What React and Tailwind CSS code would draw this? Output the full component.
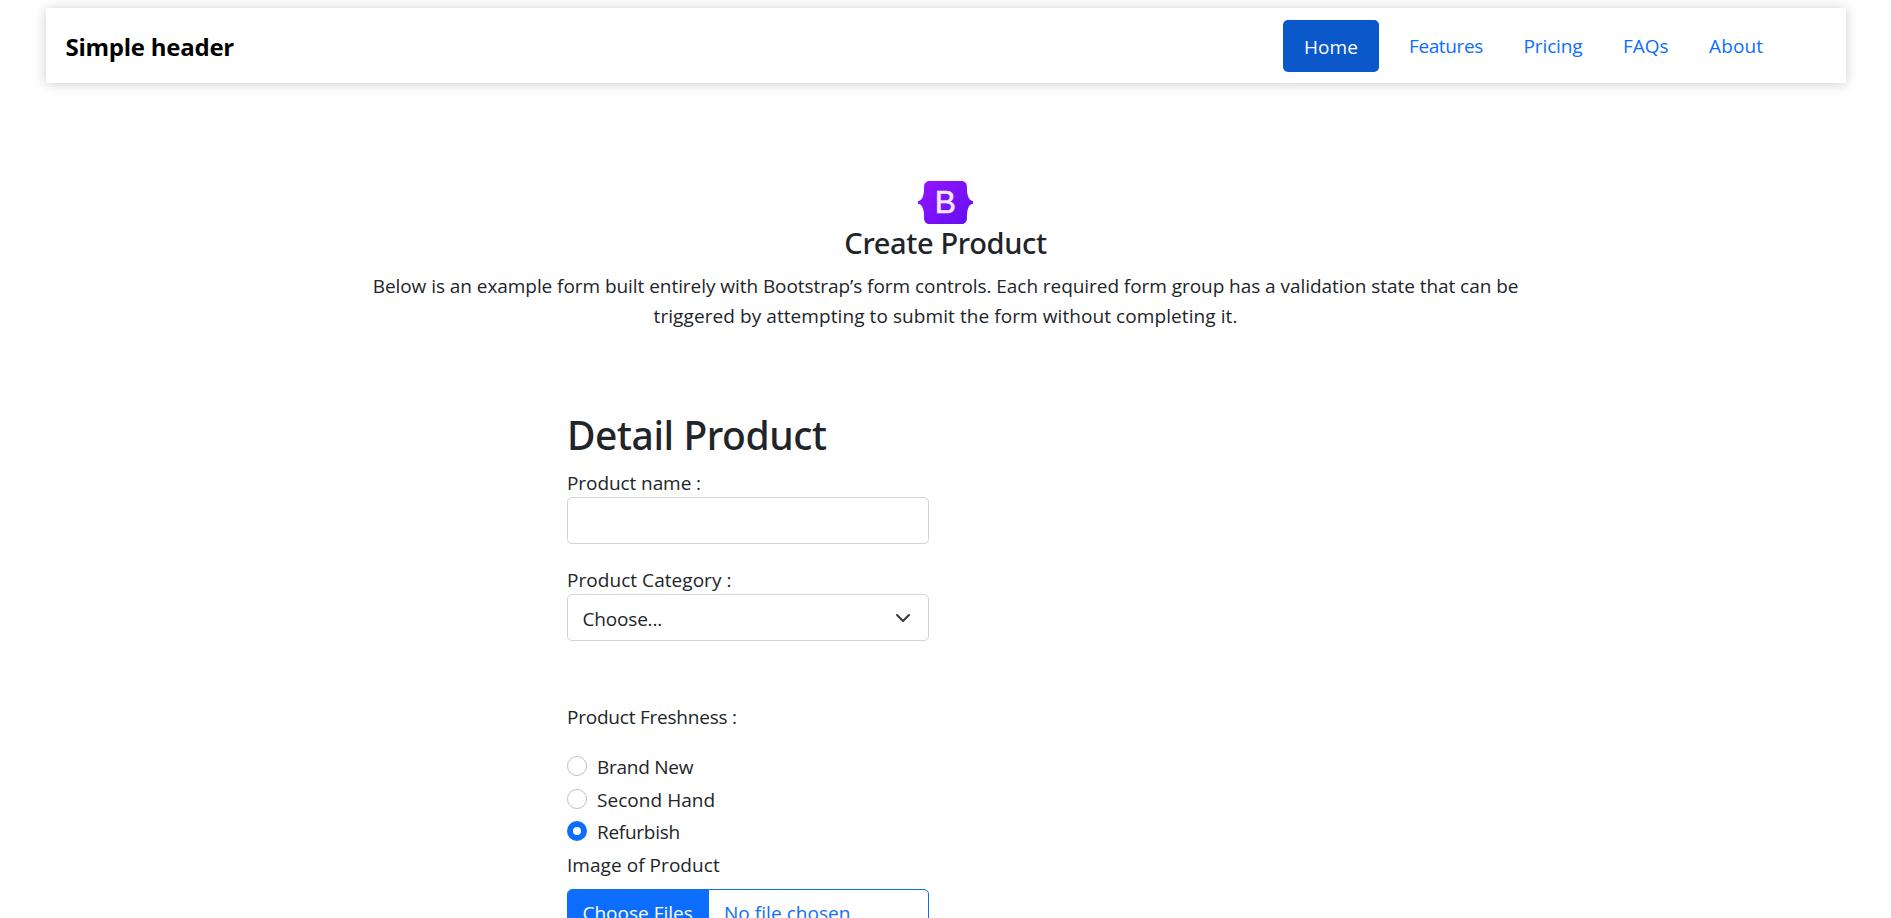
function BootstrapLogo() {
  return (
    <svg className="h-[43px] w-[55px]" viewBox="0 0 118 94" preserveAspectRatio="none" role="img" aria-label="Bootstrap">
      <defs>
        <linearGradient id="logo-fill" x1="0" y1="0" x2="1" y2="1">
          <stop offset="0.1" stopColor="#9013fe" />
          <stop offset="0.9" stopColor="#6610f2" />
        </linearGradient>
      </defs>
      <path
        fill="url(#logo-fill)"
        d="M24.509 0c-6.733 0-11.715 5.893-11.492 12.284.214 6.14-.064 14.092-2.066 20.577C8.943 39.365 5.547 43.485 0 44.014v5.972c5.547.529 8.943 4.649 10.951 11.153 2.002 6.485 2.28 14.437 2.066 20.577C12.794 88.106 17.776 94 24.51 94H93.5c6.733 0 11.714-5.893 11.491-12.284-.214-6.14.064-14.092 2.066-20.577 2.009-6.504 5.396-10.624 10.943-11.153v-5.972c-5.547-.529-8.934-4.649-10.943-11.153-2.002-6.484-2.28-14.437-2.066-20.577C105.214 5.894 100.233 0 93.5 0H24.508z"
      />
      <text
        x="58.8"
        y="71"
        textAnchor="middle"
        fill="#f3eafe"
        stroke="#f3eafe"
        strokeWidth="1.2"
        fontFamily="Liberation Sans, sans-serif"
        fontSize="68"
      >
        B
      </text>
    </svg>
  );
}

function Radio({ label, checked, spacing, row }) {
  return (
    <label className={`flex gap-[10px] ${row}`}>
      <input
        type="radio"
        name="freshness"
        defaultChecked={checked}
        className="mt-[5px] size-5 shrink-0 appearance-none rounded-full border border-[#bfbfbf] bg-white checked:border-[6px] checked:border-[#0d6efd]"
      />
      <span className={`pt-px ${spacing}`}>{label}</span>
    </label>
  );
}

export default function App() {
  return (
    <div className="h-[918px] overflow-hidden bg-white pt-2 font-['Open_Sans','Noto_Sans',sans-serif] text-[19px] leading-[30px] text-[#212529]">
      <header className="mr-[45px] ml-[46px] flex h-[75px] items-center justify-between bg-white pr-[63px] pl-[19.5px] shadow-[0_1px_12px_rgba(0,0,0,0.2)]">
        <span className="pt-[3px] text-[24px] font-bold tracking-[-0.25px] text-black">Simple header</span>
        <nav className="flex items-center text-[#0d6efd]">
          <a className="mr-[9.5px] flex h-[52px] w-[95.5px] items-center rounded-[5px] bg-[#0a58ca] pt-[3px] pl-[21px] tracking-[0.05px] text-white">Home</a>
          <a className="w-[114.5px] pt-px pl-[21px] tracking-[-0.39px]">Features</a>
          <a className="w-[99.5px] pt-px pl-[21px] tracking-[-0.12px]">Pricing</a>
          <a className="w-[87px] pt-px pl-[21px] tracking-[-0.05px]">FAQs</a>
          <a className="w-[94px] pt-px pl-5 tracking-[0.15px]">About</a>
        </nav>
      </header>

      <main>
        <section className="flex flex-col items-center pt-[98px] text-center">
          <BootstrapLogo />
          <h2 className="h-[47px] font-['Noto_Sans',sans-serif] text-[29px] leading-[38px] font-medium tracking-[-0.35px]">Create Product</h2>
          <p className="whitespace-nowrap">
            <span className="block tracking-[-0.055px]">
              Below is an example form built entirely with Bootstrap’s form controls. Each required form group has a validation state that can be
            </span>
            <span className="block tracking-[0.078px]">triggered by attempting to submit the form without completing it.</span>
          </p>
        </section>

        <form className="ml-[567px] w-[362px] pt-[79px]">
          <h1 className="h-[58px] font-['Noto_Sans',sans-serif] text-[39px] leading-[50px] font-medium tracking-[-0.42px]">Detail Product</h1>
          <label className="block h-[29px] tracking-[-0.08px]">Product name :</label>
          <input className="block h-[47px] w-full rounded-[5px] border border-[#ced4da] px-[15px] outline-none" />

          <label className="mt-5 block h-[30px] pt-px tracking-[0.05px]">Product Category :</label>
          <div className="flex h-[47px] items-center justify-between rounded-[5px] border border-[#ced4da] pr-[17px] pl-[14.5px]">
            <span className="pt-[3px] tracking-[-0.18px]">Choose...</span>
            <svg className="size-4" viewBox="0 0 16 16" fill="none" stroke="#343a40" strokeWidth="2" strokeLinecap="round" strokeLinejoin="round">
              <path d="m2 5 6 6 6-6" />
            </svg>
          </div>

          <p className="mt-[60px] h-[30px] pt-px tracking-[-0.22px]">Product Freshness :</p>
          <div className="mt-5">
            <Radio label="Brand New" row="h-[33px]" spacing="tracking-[-0.25px]" />
            <Radio label="Second Hand" row="h-8" spacing="tracking-[0.05px]" />
            <Radio label="Refurbish" row="h-[33px]" spacing="tracking-[-0.28px]" checked />
          </div>
          <p className="h-10 pt-px tracking-[0.05px]">Image of Product</p>
          <div className="flex h-[47px] overflow-hidden rounded-[5px] border border-[#0d6efd]">
            <span className="w-[141px] bg-[#0d6efd] pt-[8px] pl-[14.5px] text-white">Choose Files</span>
            <span className="pt-[8px] pl-[15px] tracking-[0.05px] text-[#0d6efd]">No file chosen</span>
          </div>
        </form>
      </main>
    </div>
  );
}
